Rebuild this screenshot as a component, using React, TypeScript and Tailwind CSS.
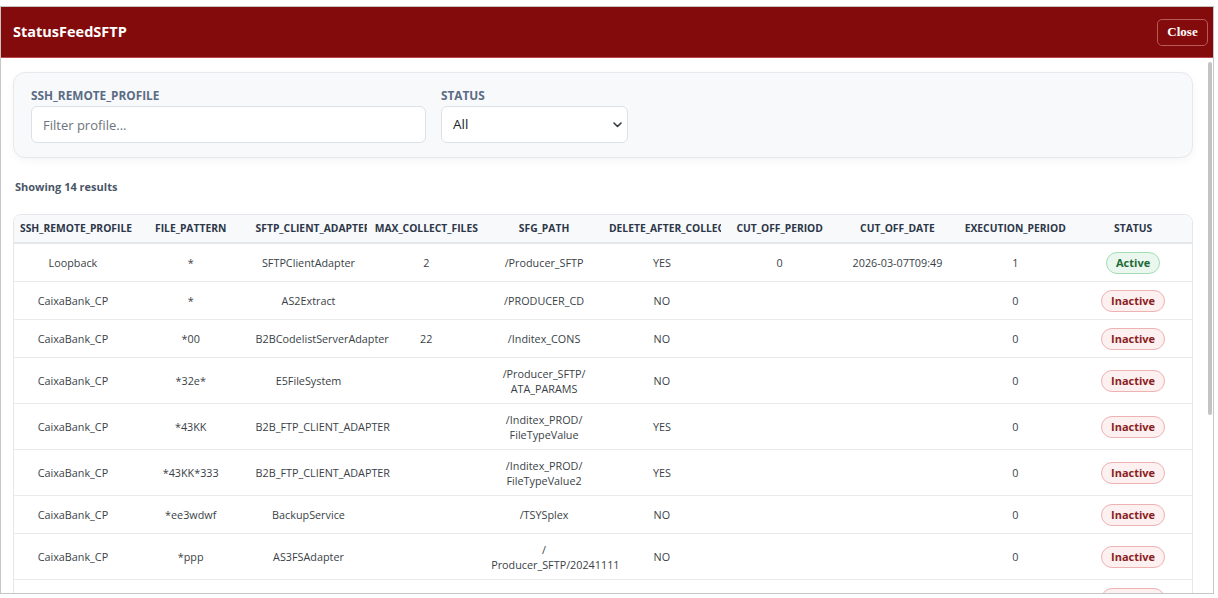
import React from "react";

type Row = {
  profile: string;
  pattern: string;
  adapter: string;
  max: string;
  path: string[];
  del: string;
  cutPeriod: string;
  cutDate: string;
  exec: string;
  active: boolean;
};

const rows: Row[] = [
  { profile: "Loopback", pattern: "*", adapter: "SFTPClientAdapter", max: "2", path: ["/Producer_SFTP"], del: "YES", cutPeriod: "0", cutDate: "2026-03-07T09:49", exec: "1", active: true },
  { profile: "CaixaBank_CP", pattern: "*", adapter: "AS2Extract", max: "", path: ["/PRODUCER_CD"], del: "NO", cutPeriod: "", cutDate: "", exec: "0", active: false },
  { profile: "CaixaBank_CP", pattern: "*00", adapter: "B2BCodelistServerAdapter", max: "22", path: ["/Inditex_CONS"], del: "NO", cutPeriod: "", cutDate: "", exec: "0", active: false },
  { profile: "CaixaBank_CP", pattern: "*32e*", adapter: "E5FileSystem", max: "", path: ["/Producer_SFTP/", "ATA_PARAMS"], del: "NO", cutPeriod: "", cutDate: "", exec: "0", active: false },
  { profile: "CaixaBank_CP", pattern: "*43KK", adapter: "B2B_FTP_CLIENT_ADAPTER", max: "", path: ["/Inditex_PROD/", "FileTypeValue"], del: "YES", cutPeriod: "", cutDate: "", exec: "0", active: false },
  { profile: "CaixaBank_CP", pattern: "*43KK*333", adapter: "B2B_FTP_CLIENT_ADAPTER", max: "", path: ["/Inditex_PROD/", "FileTypeValue2"], del: "YES", cutPeriod: "", cutDate: "", exec: "0", active: false },
  { profile: "CaixaBank_CP", pattern: "*ee3wdwf", adapter: "BackupService", max: "", path: ["/TSYSplex"], del: "NO", cutPeriod: "", cutDate: "", exec: "0", active: false },
  { profile: "CaixaBank_CP", pattern: "*ppp", adapter: "AS3FSAdapter", max: "", path: ["/", "Producer_SFTP/20241111"], del: "NO", cutPeriod: "", cutDate: "", exec: "0", active: false },
  { profile: "CaixaBank_CP", pattern: "*qa", adapter: "AS2Extract", max: "", path: ["/PRODUCER_CD"], del: "NO", cutPeriod: "", cutDate: "", exec: "0", active: false },
  { profile: "CaixaBank_CP", pattern: "*test", adapter: "SFTPClientAdapter", max: "5", path: ["/Producer_SFTP"], del: "NO", cutPeriod: "", cutDate: "", exec: "0", active: false },
  { profile: "CaixaBank_CP", pattern: "*.csv", adapter: "BackupService", max: "", path: ["/Inditex_CONS"], del: "YES", cutPeriod: "", cutDate: "", exec: "0", active: false },
  { profile: "CaixaBank_CP", pattern: "*.txt", adapter: "AS3FSAdapter", max: "", path: ["/TSYSplex"], del: "NO", cutPeriod: "", cutDate: "", exec: "0", active: false },
  { profile: "CaixaBank_CP", pattern: "*.xml", adapter: "E5FileSystem", max: "", path: ["/PRODUCER_CD"], del: "NO", cutPeriod: "", cutDate: "", exec: "0", active: false },
  { profile: "CaixaBank_CP", pattern: "*zip", adapter: "SFTPClientAdapter", max: "", path: ["/Producer_SFTP"], del: "NO", cutPeriod: "", cutDate: "", exec: "0", active: false },
];

const headers = [
  "SSH_REMOTE_PROFILE",
  "FILE_PATTERN",
  "SFTP_CLIENT_ADAPTER",
  "MAX_COLLECT_FILES",
  "SFG_PATH",
  "DELETE_AFTER_COLLECT",
  "CUT_OFF_PERIOD",
  "CUT_OFF_DATE",
  "EXECUTION_PERIOD",
  "STATUS",
];

function Badge({ active }: { active: boolean }) {
  return active ? (
    <span className="inline-flex h-[22px] items-center rounded-full border border-[#a3ddb5] bg-[#e9f7ee] px-[9px] text-[11px] font-bold text-[#1d6a36]">
      Active
    </span>
  ) : (
    <span className="inline-flex h-[22px] items-center rounded-full border border-[#eeb2b2] bg-[#fdf0f0] px-[9px] text-[11px] font-bold text-[#8b1d1d]">
      Inactive
    </span>
  );
}

const td = "px-[6px] py-[7.5px] text-center align-middle text-[10.8px] leading-[15px] text-[#3a3f47] whitespace-nowrap";

export default function App() {
  return (
    <div className="min-h-screen bg-white pt-[6px] font-['Open_Sans',sans-serif]">
      <div className="flex h-[588px] w-[1214px] flex-col overflow-hidden border border-[#c6c6c6] bg-white">
        <div className="flex h-[51px] shrink-0 items-center justify-between border-b border-[#b8484c] bg-[#830b0b] pl-[12px] pr-[5px]">
          <div className="text-[14.5px] font-bold text-white">StatusFeedSFTP</div>
          <button className="h-[27px] w-[51px] rounded-[5px] border border-[#b85a5a] font-['Liberation_Serif',serif] text-[13px] font-bold text-white">
            Close
          </button>
        </div>
        <div className="flex min-h-0 flex-1">
          <div className="min-w-0 flex-1 overflow-hidden pb-[16px] pl-[12px] pr-[10px] pt-[14px]">
            <div className="flex gap-[15px] rounded-[12px] border border-[#e6e8ec] bg-[#f8f9fb] pb-[14px] pl-[17px] pt-[15px] shadow-[0_3px_8px_rgba(0,0,0,0.04)]">
              <div className="flex w-[395px] flex-col">
                <label className="mb-[4px] text-[11.8px] font-bold leading-[14px] text-[#5b6b84]">SSH_REMOTE_PROFILE</label>
                <input
                  className="h-[37px] w-full rounded-[6px] border border-[#dde1e6] bg-white px-[11px] text-[13px] text-[#212529] outline-none placeholder:text-[#6c757d]"
                  placeholder="Filter profile..."
                />
              </div>
              <div className="flex w-[187px] flex-col">
                <label className="mb-[4px] text-[11.8px] font-bold leading-[14px] text-[#5b6b84]">STATUS</label>
                <div className="relative">
                  <select className="h-[37px] w-full appearance-none rounded-[6px] border border-[#dde1e6] bg-white px-[11px] text-[13.5px] text-[#212529] outline-none">
                    <option>All</option>
                    <option>Active</option>
                    <option>Inactive</option>
                  </select>
                  <svg className="pointer-events-none absolute right-[6px] top-[16px]" width="9" height="6" viewBox="0 0 9 6" fill="none">
                    <path d="M1 1l3.5 3.5L8 1" stroke="#343a40" strokeWidth="1.6" strokeLinecap="round" strokeLinejoin="round" />
                  </svg>
                </div>
              </div>
            </div>

            <div className="mt-[21px] pl-[2px] text-[11px] font-bold leading-[16px] text-[#4a5568]">Showing 14 results</div>

            <div className="mt-[19px] overflow-hidden rounded-[8px] border border-[#e5e7eb]">
              <table className="w-full table-fixed border-collapse">
                <thead>
                  <tr className="border-b-2 border-[#e5e7eb] bg-[#f8f9fb]">
                    {headers.map((h) => (
                      <th
                        key={h}
                        className="overflow-hidden whitespace-nowrap px-[6px] py-[7px] text-center text-[10.3px] font-bold leading-[13px] text-[#2d3748]"
                      >
                        {h}
                      </th>
                    ))}
                  </tr>
                </thead>
                <tbody>
                  {rows.map((r, i) => (
                    <tr key={i} className="border-b border-[#e8eaed]">
                      <td className={td}>{r.profile}</td>
                      <td className={td}>{r.pattern}</td>
                      <td className={td}>{r.adapter}</td>
                      <td className={td}>{r.max}</td>
                      <td className={td}>
                        {r.path.map((p, j) => (
                          <div key={j}>{p}</div>
                        ))}
                      </td>
                      <td className={td}>{r.del}</td>
                      <td className={td}>{r.cutPeriod}</td>
                      <td className={td}>{r.cutDate}</td>
                      <td className={td}>{r.exec}</td>
                      <td className={td}>
                        <Badge active={r.active} />
                      </td>
                    </tr>
                  ))}
                </tbody>
              </table>
            </div>
          </div>
          <div className="flex w-[10px] shrink-0 justify-end bg-white pr-[1px] pt-[4px]">
            <div className="h-[353px] w-[4px] rounded-[2px] bg-[#c3c3c3]" />
          </div>
        </div>
      </div>
    </div>
  );
}
